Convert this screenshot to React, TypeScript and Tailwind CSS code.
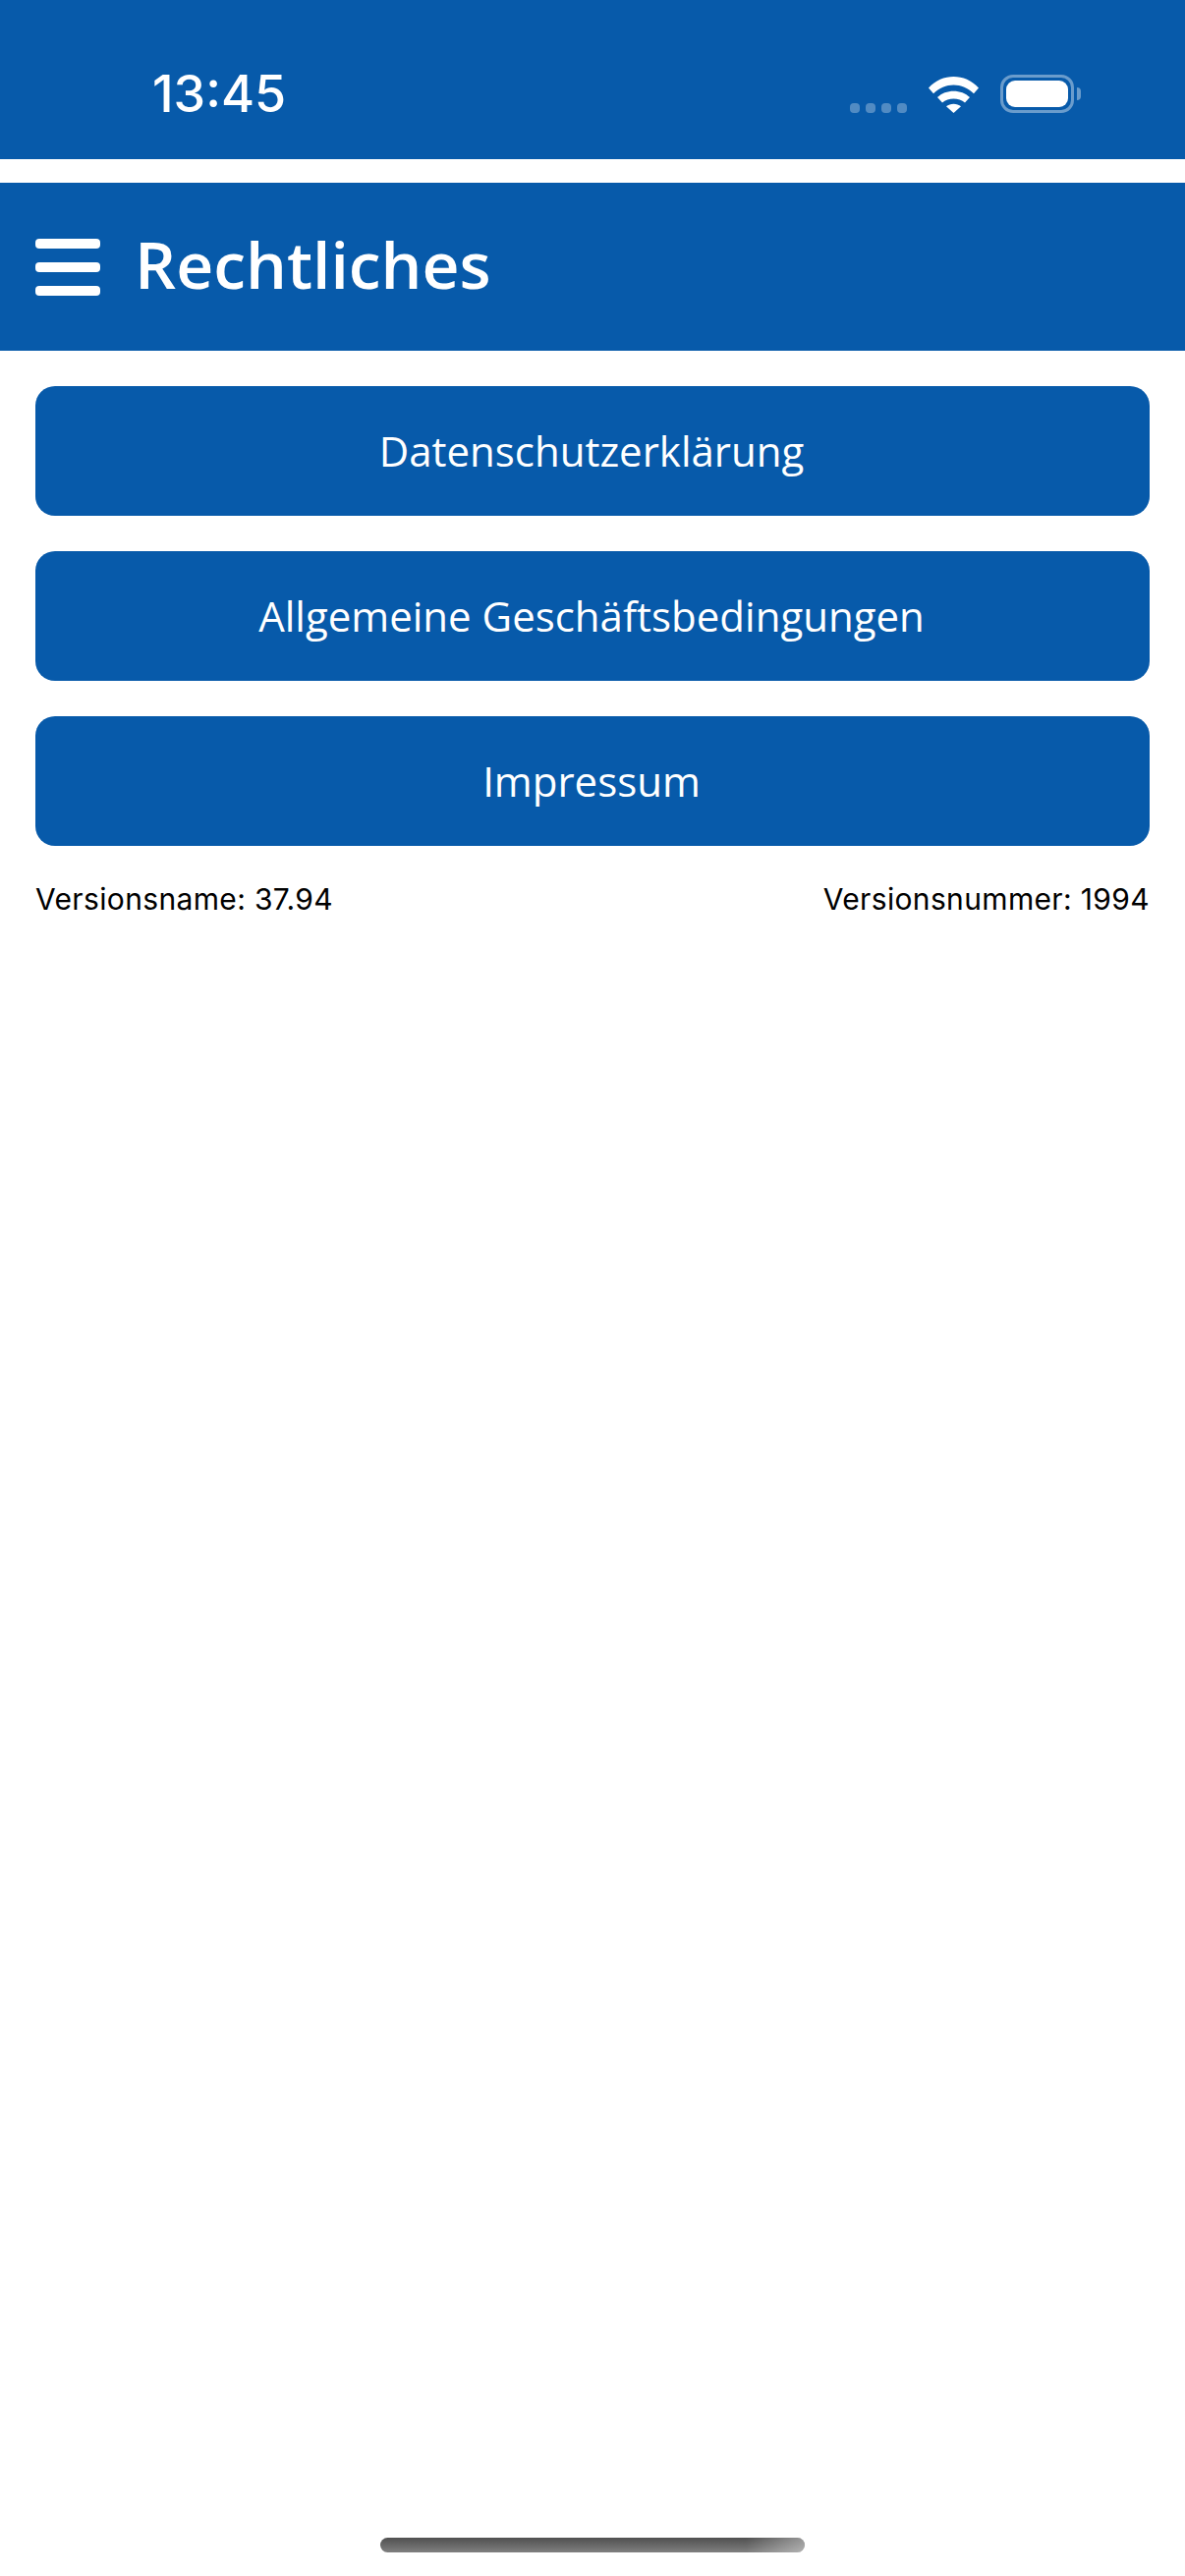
const links = ["Datenschutzerklärung", "Allgemeine Geschäftsbedingungen", "Impressum"];

const StatusBar = () => (
    <div className="h-[162px] bg-[#075aaa] flex items-end justify-between pl-[155px] pr-[106px] pb-[47px] text-white">
        <span className="font-['Inter',sans-serif] text-[52px] leading-[51px] font-medium -mb-[6px]">13:45</span>
        <div className="flex items-end">
            <div className="flex gap-[6px] mr-[22px]">
                <span className="w-[10px] h-[10px] rounded-[4px] bg-white/30" />
                <span className="w-[10px] h-[10px] rounded-[4px] bg-white/30" />
                <span className="w-[10px] h-[10px] rounded-[4px] bg-white/30" />
                <span className="w-[10px] h-[10px] rounded-[4px] bg-white/30" />
            </div>
            <svg width="51" height="37" viewBox="0 0 51 37" className="mr-[22px]" fill="white">
                <path d="M0 11.5 C14 -3.8 37 -3.8 51 11.5 L46 17.3 C34.5 5.5 16.5 5.5 5 17.3 Z" />
                <path d="M9 21 C17.5 12.5 33.5 12.5 42 21 L37 26.5 C31 21 20 21 14 26.5 Z" />
                <path d="M18 30.3 C22 26.8 29 26.8 33 30.3 L25.5 37 Z" />
            </svg>
            <div className="flex items-center">
                <div className="w-[75px] h-[39px] rounded-[13px] border-[3px] border-white/40 p-[3px]">
                    <div className="w-full h-full rounded-[9px] bg-white" />
                </div>
                <span className="ml-[3px] w-[4px] h-[13px] rounded-r-full bg-white/40" />
            </div>
        </div>
    </div>
);

const App = () => {
    return (
        <div className="min-h-screen bg-white flex flex-col">
            <StatusBar />
            <header className="mt-[24px] h-[171px] bg-[#075aaa] flex items-center px-[36px] text-white">
                <div className="w-[66px] flex flex-col gap-[14px]">
                    <span className="h-[10px] rounded-[4px] bg-white" />
                    <span className="h-[10px] rounded-[4px] bg-white" />
                    <span className="h-[10px] rounded-[4px] bg-white" />
                </div>
                <h1 className="ml-[35px] pb-[7px] font-['Open_Sans',sans-serif] text-[66px] font-semibold leading-none">Rechtliches</h1>
            </header>

            <main className="flex flex-col gap-[36px] px-[36px] pt-[36px]">
                {links.map((label) => (
                    <button key={label} className="h-[132px] pb-[1px] pr-[2px] rounded-[20px] bg-[#075aaa] text-white font-['Open_Sans',sans-serif] text-[42px] font-normal">
                        {label}
                    </button>
                ))}
            </main>

            <div className="flex justify-between px-[36px] pt-[34px] font-['Inter',sans-serif] text-[30px] tracking-[0.35px] leading-[40px] text-black">
                <span>Versionsname: 37.94</span>
                <span>Versionsnummer: 1994</span>
            </div>

            <div className="mt-auto pb-[24px] flex justify-center">
                <div className="relative w-[432px] h-[15px] rounded-full overflow-hidden bg-gradient-to-b from-[#505050] to-[#808080]">
                    <div className="absolute inset-y-0 right-0 w-[60px] bg-gradient-to-r from-white/0 to-white/40" />
                </div>
            </div>
        </div>
    );
};

export default App;
